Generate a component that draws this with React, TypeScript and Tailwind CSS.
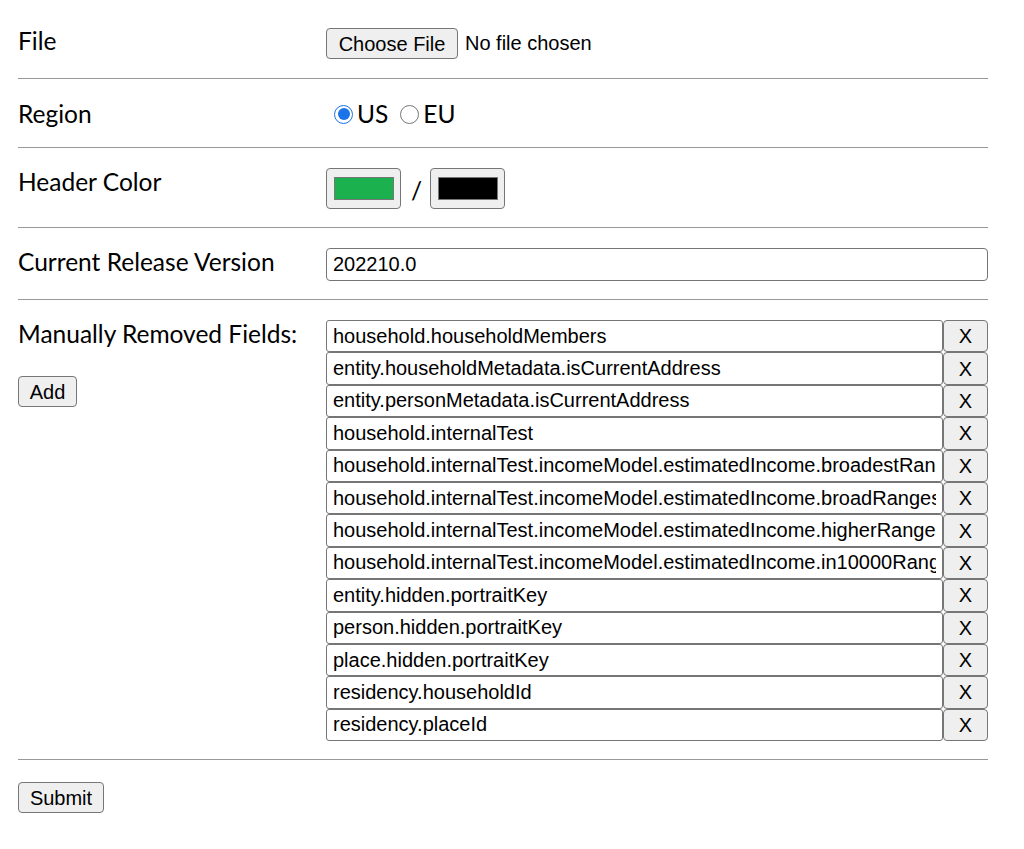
import React from "react";

const fields = [
  "household.householdMembers",
  "entity.householdMetadata.isCurrentAddress",
  "entity.personMetadata.isCurrentAddress",
  "household.internalTest",
  "household.internalTest.incomeModel.estimatedIncome.broadestRanges",
  "household.internalTest.incomeModel.estimatedIncome.broadRanges",
  "household.internalTest.incomeModel.estimatedIncome.higherRanges",
  "household.internalTest.incomeModel.estimatedIncome.in10000Ranges",
  "entity.hidden.portraitKey",
  "person.hidden.portraitKey",
  "place.hidden.portraitKey",
  "residency.householdId",
  "residency.placeId",
];

const label = "font-['Lato',sans-serif] text-[24.5px] leading-[28px] text-black";
const ctrl = "font-['Liberation_Sans',Arial,sans-serif] text-[20px] text-black";
const btn = `${ctrl} bg-[#efefef] border border-[#767676] rounded-[4px] leading-none`;

function Swatch({ color }: { color: string }) {
  return (
    <div className="w-[75px] h-[41px] bg-[#efefef] border border-[#767676] rounded-[4px] flex items-center justify-center">
      <div className="w-[60px] h-[23px] border border-[#777]" style={{ background: color }} />
    </div>
  );
}

export default function App() {
  return (
    <div className="bg-white min-h-[849px] px-[18px] w-[1006px]">
      <div className="flex pt-[28px] pb-[19px] border-b border-[#999]">
        <div className={`${label} w-[308px] -mt-[1px]`}>File</div>
        <div className="flex items-center">
          <button className={`${btn} w-[132px] h-[31px]`}>Choose File</button>
          <span className={`${ctrl} ml-[7px] -mt-[2px]`}>No file chosen</span>
        </div>
      </div>

      <div className="flex pt-[21px] pb-[19px] border-b border-[#999]">
        <div className={`${label} w-[308px]`}>Region</div>
        <div className={`${label} flex items-center`}>
          <span className="ml-[8px] w-[19px] h-[19px] rounded-full border-[1.5px] border-[#1a73e8] flex items-center justify-center">
            <span className="w-[12px] h-[12px] rounded-full bg-[#1a73e8]" />
          </span>
          <span className="ml-[4px]">US</span>
          <span className="ml-[12px] w-[19px] h-[19px] rounded-full border border-[#767676]" />
          <span className="ml-[4px]">EU</span>
        </div>
      </div>

      <div className="flex pt-[20px] pb-[18px] border-b border-[#999]">
        <div className={`${label} w-[308px]`}>Header Color</div>
        <div className="flex items-center">
          <Swatch color="#1bb14f" />
          <span className={`${label} ml-[10px] mr-[8px] mt-[4px]`}>/</span>
          <Swatch color="#000000" />
        </div>
      </div>

      <div className="flex pt-[20px] pb-[18px] border-b border-[#999]">
        <div className={`${label} w-[308px]`}>Current Release Version</div>
        <input
          readOnly
          value="202210.0"
          className={`${ctrl} flex-1 h-[33px] px-[6px] border border-[#767676] rounded-[4px] outline-none`}
        />
      </div>

      <div className="flex pt-[20px] pb-[18px] border-b border-[#999]">
        <div className="w-[308px]">
          <div className={`${label}`}>Manually Removed Fields:</div>
          <button className={`${btn} mt-[28px] w-[59px] h-[31px]`}>Add</button>
        </div>
        <div className="flex-1 flex flex-col">
          {fields.map((f) => (
            <div key={f} className="flex h-[32.4px]">
              <input
                readOnly
                value={f}
                className={`${ctrl} w-[617px] h-full px-[6px] border border-[#767676] rounded-[3px] outline-none`}
              />
              <button className={`${btn} w-[45px] h-full`}>X</button>
            </div>
          ))}
        </div>
      </div>

      <div className="pt-[22px]">
        <button className={`${btn} w-[86px] h-[31px]`}>Submit</button>
      </div>
    </div>
  );
}
